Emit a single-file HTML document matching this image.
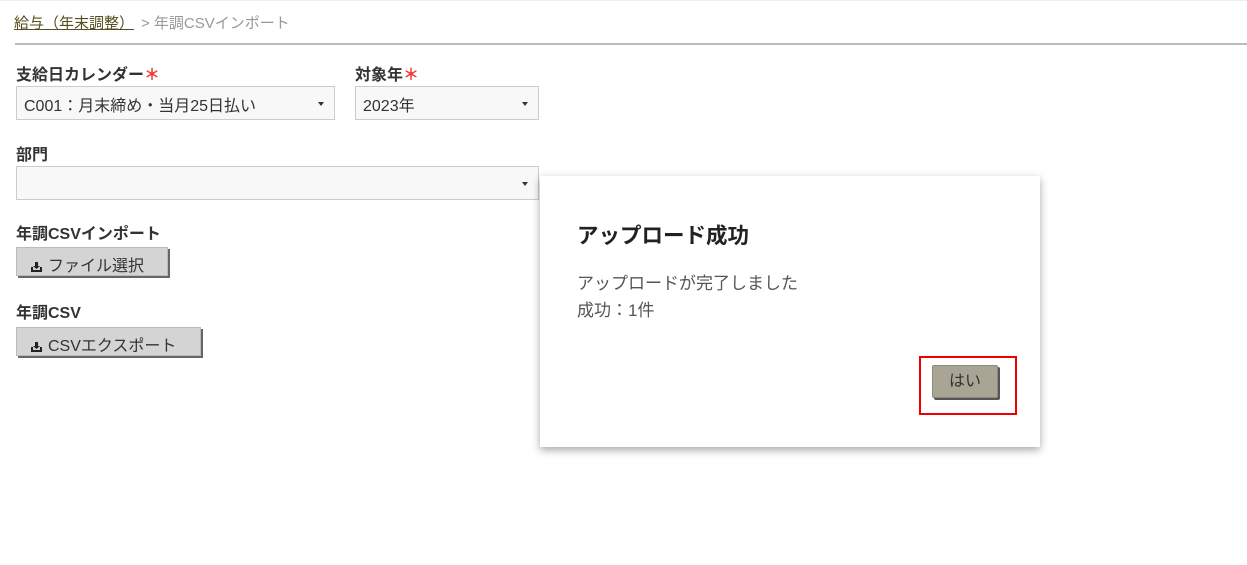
<!DOCTYPE html>
<html><head><meta charset="utf-8"><style>
*{margin:0;padding:0;box-sizing:border-box}
body{width:1247px;height:565px;background:#fff;position:relative;overflow:hidden;font-family:"Liberation Sans","Noto Sans CJK JP",sans-serif;color:#333}
.a{position:absolute;white-space:nowrap}
.lbl{font-size:16px;font-weight:bold;color:#333}
.star{color:#e33;font-weight:bold}
.sel{position:absolute;border:1px solid #ccc;background:#f8f8f8;height:34px;font-size:16px;padding:5px 7px;color:#333}
.sel:after{content:"";position:absolute;right:10px;top:15px;border-left:3px solid transparent;border-right:3px solid transparent;border-top:4px solid #333}
.btn{position:absolute;background:#d4d4d4;border:1px solid #bbb;box-shadow:2px 2px 0 #666;font-size:16px;padding:4px 0 0 14px;height:29px;color:#333}
.ic{display:inline-block;width:11px;height:10px;position:relative;margin-right:6px;vertical-align:-1px}
</style></head><body>
<div class="a" style="top:0;left:0;width:1247px;height:1px;background:#eee"></div>
<div class="a" style="left:14px;top:12px;font-size:15px;color:#554d1e;text-decoration:underline">給与（年末調整）</div>
<div class="a" style="left:141px;top:12px;font-size:15px;color:#999">&gt; 年調CSVインポート</div>
<div class="a" style="left:15px;top:43px;width:1232px;height:2px;background:#bbb"></div>

<div class="a lbl" style="left:16px;top:61px">支給日カレンダー<span class="star">＊</span></div>
<div class="sel" style="left:16px;top:86px;width:319px">C001：月末締め・当月25日払い</div>
<div class="a lbl" style="left:355px;top:61px">対象年<span class="star">＊</span></div>
<div class="sel" style="left:355px;top:86px;width:184px">2023年</div>

<div class="a lbl" style="left:16px;top:141px">部門</div>
<div class="sel" style="left:16px;top:166px;width:523px"></div>

<div class="a lbl" style="left:16px;top:220px">年調CSVインポート</div>
<div class="btn" style="left:16px;top:247px;width:152px"><svg class="ic" viewBox="0 0 11 10"><path d="M0 5h2v3h7V5h2v5H0z M4 0h3v4h2L5.5 7 2 4h2z" fill="#222"/></svg>ファイル選択</div>
<div class="a lbl" style="left:16px;top:299px">年調CSV</div>
<div class="btn" style="left:16px;top:327px;width:185px"><svg class="ic" viewBox="0 0 11 10"><path d="M0 5h2v3h7V5h2v5H0z M4 0h3v4h2L5.5 7 2 4h2z" fill="#222"/></svg>CSVエクスポート</div>

<div class="a" style="left:540px;top:176px;width:500px;height:271px;background:#fff;box-shadow:0 3px 8px rgba(0,0,0,.35)"></div>
<div class="a" style="left:577px;top:219px;font-size:21.5px;font-weight:bold;color:#222">アップロード成功</div>
<div class="a" style="left:577px;top:270px;font-size:17px;color:#555;line-height:27px">アップロードが完了しました<br>成功：1件</div>
<div class="a" style="left:919px;top:356px;width:98px;height:59px;border:2px solid #e00"></div>
<div class="a" style="left:932px;top:365px;width:66px;height:33px;background:#a8a594;border:1px solid #8d8a7a;border-radius:2px;box-shadow:2px 2px 0 #555;font-size:16px;text-align:center;line-height:31px;color:#333">はい</div>
</body></html>
